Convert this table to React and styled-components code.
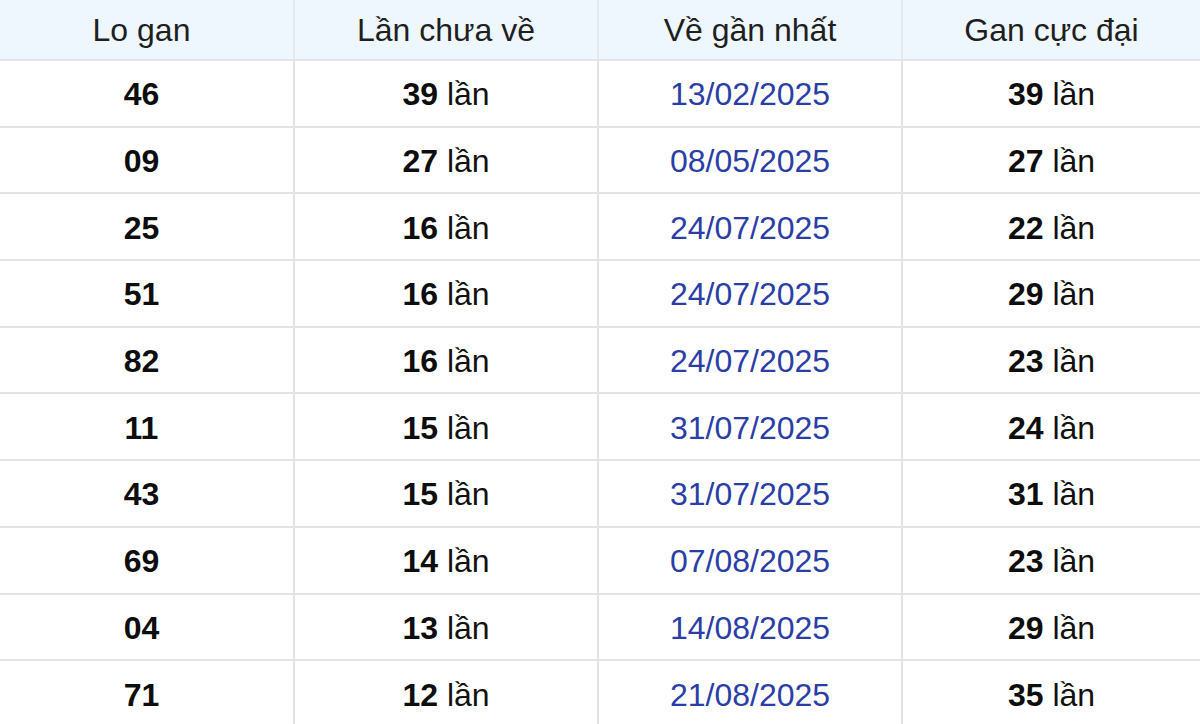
import React from 'react'
import styled, { createGlobalStyle } from 'styled-components'

const GlobalStyle = createGlobalStyle`
  html, body {
    margin: 0;
    padding: 0;
    background: #fff;
    font-family: "Liberation Sans", Arial, sans-serif;
    overflow: hidden;
  }
`

const Table = styled.div`
  display: grid;
  grid-template-columns: 293px 304px 304px 1fr;
  width: 1200px;
`

const HeadCell = styled.div`
  height: 61px;
  box-sizing: border-box;
  display: flex;
  align-items: center;
  justify-content: center;
  background: #eef6fe;
  border-bottom: 2px solid #e0e4e8;
  border-left: ${p => (p.$first ? 'none' : '2px solid #e6e9ec')};
  padding-right: ${p => (p.$first ? '10px' : '0')};
  font-size: 32px;
  color: #1f1f1f;
  padding-top: 2px;
`

const Cell = styled.div`
  height: 66.7px;
  box-sizing: border-box;
  display: flex;
  align-items: center;
  justify-content: center;
  border-bottom: 2px solid #e3e3e3;
  border-left: ${p => (p.$first ? 'none' : '2px solid #e3e3e3')};
  padding-right: ${p => (p.$first ? '10px' : '0')};
  font-size: 32px;
  color: #111;
  padding-top: 3px;
`

const Num = styled.b`
  font-weight: 700;
  color: #0d0d0d;
`

const Date = styled.span`
  color: #2a3ea6;
`

const rows = [
  ['46', '39', '13/02/2025', '39'],
  ['09', '27', '08/05/2025', '27'],
  ['25', '16', '24/07/2025', '22'],
  ['51', '16', '24/07/2025', '29'],
  ['82', '16', '24/07/2025', '23'],
  ['11', '15', '31/07/2025', '24'],
  ['43', '15', '31/07/2025', '31'],
  ['69', '14', '07/08/2025', '23'],
  ['04', '13', '14/08/2025', '29'],
  ['71', '12', '21/08/2025', '35'],
]

const Times = ({ n }) => (
  <span>
    <Num>{n}</Num> lần
  </span>
)

export default function App() {
  return (
    <>
      <GlobalStyle />
      <Table>
        <HeadCell $first>Lo gan</HeadCell>
        <HeadCell>Lần chưa về</HeadCell>
        <HeadCell>Về gần nhất</HeadCell>
        <HeadCell>Gan cực đại</HeadCell>
        {rows.map(r => (
          <React.Fragment key={r[0]}>
            <Cell $first><Num>{r[0]}</Num></Cell>
            <Cell><Times n={r[1]} /></Cell>
            <Cell><Date>{r[2]}</Date></Cell>
            <Cell><Times n={r[3]} /></Cell>
          </React.Fragment>
        ))}
      </Table>
    </>
  )
}
